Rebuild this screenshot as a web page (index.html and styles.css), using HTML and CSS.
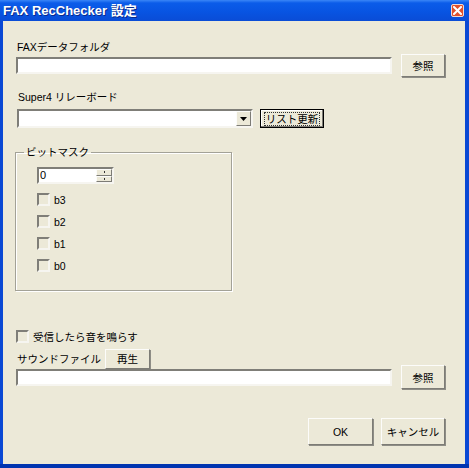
FILE: index.html
```html
<!DOCTYPE html>
<html lang="ja">
<head>
  <meta charset="UTF-8">
  <title>FAX RecChecker 設定</title>
  <link rel="stylesheet" href="styles.css">
</head>
<body>
  <div class="window">
    <div class="titlebar">
      <span class="title">FAX RecChecker 設定</span>
      <span class="close">
        <svg width="9" height="9" viewBox="0 0 9 9"><path d="M1 1 L8 8 M8 1 L1 8" stroke="#fff" stroke-width="2" stroke-linecap="square"/></svg>
      </span>
    </div>
    <div class="client">
      <div class="label lbl-fax">FAXデータフォルダ</div>
      <div class="row row-fax">
        <div class="edit"></div>
        <button class="btn btn-ref">参照</button>
      </div>

      <div class="label lbl-relay">Super4 リレーボード</div>
      <div class="row row-relay">
        <div class="combo">
          <span class="combo-text"></span>
          <span class="combo-arrow"><svg width="7" height="4" viewBox="0 0 7 4"><path d="M0 0 H7 L3.5 4 Z" fill="#000"/></svg></span>
        </div>
        <button class="btn btn-default"><span class="focus">リスト更新</span></button>
      </div>

      <fieldset class="group">
        <legend>ビットマスク</legend>
        <div class="group-body">
          <div class="spin">
            <span class="spin-text">0</span>
            <span class="spin-btns">
              <span class="spin-btn"><i class="arr"></i></span>
              <span class="spin-btn"><i class="arr"></i></span>
            </span>
          </div>
          <label class="check"><span class="box"></span>b3</label>
          <label class="check"><span class="box"></span>b2</label>
          <label class="check"><span class="box"></span>b1</label>
          <label class="check"><span class="box"></span>b0</label>
        </div>
      </fieldset>

      <label class="check check-sound"><span class="box"></span>受信したら音を鳴らす</label>
      <div class="row row-sound">
        <span class="label lbl-sound">サウンドファイル</span>
        <button class="btn btn-play">再生</button>
      </div>
      <div class="row row-file">
        <div class="edit"></div>
        <button class="btn btn-ref2">参照</button>
      </div>

      <div class="row row-footer">
        <button class="btn btn-ok">OK</button>
        <button class="btn btn-cancel">キャンセル</button>
      </div>
    </div>
  </div>
</body>
</html>
```

FILE: styles.css
```css
body { margin: 0; font-family: "Liberation Sans", "Noto Sans CJK JP", sans-serif; font-size: 10.5px; color: #000; background: #0b4fd8; }
.window { width: 469px; height: 468px; background: #0a48d4; display: flex; flex-direction: column; box-sizing: border-box; border-bottom: 4px solid #0034b0; }
.titlebar { height: 21px; flex: none; display: flex; align-items: center; justify-content: space-between; padding: 0 5px 0 3px; background: linear-gradient(#3a86f7 0, #0b5ce9 3px, #0854e2 12px, #0a4cd6 21px); }
.title { color: #fff; font-weight: bold; font-size: 13px; line-height: 21px; text-shadow: 1px 1px #0b2a8c; }
.close { width: 13px; height: 13px; box-sizing: border-box; border: 1px solid #f0d8d0; border-radius: 2px; background: #e0502c; display: flex; align-items: center; justify-content: center; }
.client { flex: 1; margin: 0 4px 0 3px; background: #ece9d8; padding: 20px 20px 0 12px; }
.label { line-height: 12px; height: 12px; white-space: nowrap; }
.lbl-fax { margin-left: 2px; }
.row { display: flex; align-items: center; }
.row-fax { margin-top: 1px; height: 23px; margin-left: 1px; }
.edit { width: 376px; height: 17px; box-sizing: border-box; background: #fff; border: 2px solid; border-color: #7f7e78 #f6f5f0 #f6f5f0 #7f7e78; }
.btn { font: inherit; padding: 0; margin: 0; background: #ece9d8; box-sizing: border-box; border: 1px solid; border-color: #fcfcfa #7d7c76 #7d7c76 #fcfcfa; box-shadow: 1px 1px 0 #8e8d86; display: flex; align-items: center; justify-content: center; color: #000; }
.btn-ref { width: 44px; height: 23px; margin-left: 9px; }
.lbl-relay { margin-top: 14px; margin-left: 3px; }
.row-relay { margin-top: 6px; height: 19px; margin-left: 2px; }
.combo { width: 236px; height: 19px; box-sizing: border-box; background: #fff; border: 2px solid; border-color: #7f7e78 #f6f5f0 #f6f5f0 #7f7e78; display: flex; justify-content: flex-end; }
.combo-arrow { width: 15px; height: 15px; box-sizing: border-box; background: #ece9d8; border: 1px solid; border-color: #fcfcfa #7d7c76 #7d7c76 #fcfcfa; display: flex; align-items: center; justify-content: center; }
.btn-default { width: 64px; height: 19px; margin-left: 7px; border: 1px solid #000; box-shadow: inset -1px -1px 0 #7d7c76, inset 1px 1px 0 #fff; }
.focus { border: 1px dotted #333; padding: 0 1px; line-height: 12px; }
.group { margin: 18px 0 0 0; padding: 0 0 18px 0; width: 217px; box-sizing: border-box; border: 1px solid #a3a297; box-shadow: inset 1px 1px 0 #fff, 1px 1px 0 #fff; }
.group legend { margin-left: 8px; padding: 0 2px; line-height: 12px; height: 12px; }
.group-body { padding: 9px 0 0 21px; }
.spin { width: 77px; height: 17px; box-sizing: border-box; background: #fff; border: 2px solid; border-color: #7f7e78 #f6f5f0 #f6f5f0 #7f7e78; display: flex; justify-content: space-between; margin-bottom: 2px; }
.spin-text { line-height: 13px; padding-left: 1px; font-size: 11px; }
.spin-btns { width: 16px; display: flex; flex-direction: column; }
.spin-btn { flex: 1; background: #ece9d8; border: 1px solid; border-color: #fcfcfa #7d7c76 #7d7c76 #fcfcfa; display: flex; align-items: center; justify-content: center; }
.arr { width: 1px; height: 2px; background: #333; }
.check { display: flex; align-items: center; height: 13px; margin-top: 9px; line-height: 12px; }
.box { width: 13px; height: 13px; box-sizing: border-box; border: 2px solid; border-color: #7f7e78 #f6f5f0 #f6f5f0 #7f7e78; margin-right: 4px; flex: none; }
.check-sound { margin: 39px 0 0 1px; }
.check-sound .box { margin-right: 4px; }
.row-sound { margin-top: 5px; height: 21px; margin-left: 2px; }
.lbl-sound { width: 88px; }
.btn-play { width: 45px; height: 20px; }
.row-file { margin-top: -4px; height: 24px; margin-left: 1px; }
.btn-ref2 { width: 44px; height: 24px; margin-left: 9px; }
.row-footer { margin-top: 29px; justify-content: flex-end; gap: 8px; }
.btn-ok { width: 65px; height: 27px; }
.btn-cancel { width: 64px; height: 27px; }
```
